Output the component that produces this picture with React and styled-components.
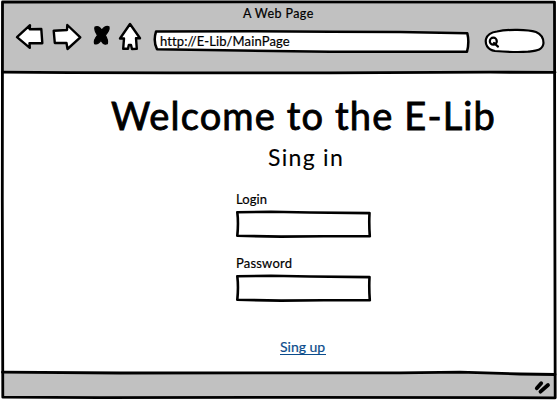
import React from "react";
import styled, { createGlobalStyle } from "styled-components";

const GlobalStyle = createGlobalStyle`
  * { box-sizing: border-box; }
  body { margin: 0; background: #fff; overflow: hidden; }
`;

const Window = styled.div`
  position: relative;
  display: flex;
  flex-direction: column;
  width: 557px;
  height: 400px;
  padding: 2px 2px 3px;
  background: #fff;
  color: #000;
  font-family: Lato, "Open Sans", sans-serif;
`;

const Sketch = styled.svg`
  position: absolute;
  inset: 0;
  width: 100%;
  height: 100%;
  overflow: visible;
  pointer-events: none;
  fill: ${(p) => p.$fill || "none"};
  stroke: #000;
  stroke-width: ${(p) => p.$weight || 2.8};
  stroke-linecap: round;
  stroke-linejoin: round;
`;

const Header = styled.header`
  height: 71px;
  flex: none;
  background: #c1c1c1;
`;

const Text = styled.div`
  width: max-content;
  font-size: ${(p) => p.$size}px;
  font-weight: 400;
  line-height: ${(p) => p.$line}px;
  letter-spacing: ${(p) => p.$track || 0}px;
  -webkit-text-stroke: ${(p) => p.$stroke || 0.2}px currentColor;
  white-space: nowrap;
`;

const TitleBar = styled.div`
  height: 20px;
  padding: 3px 0 0 241px;
`;

const Toolbar = styled.div`
  display: flex;
  align-items: flex-start;
  padding-left: 12px;
`;

const NavIcons = styled.svg`
  width: 138px;
  height: 34px;
  flex: none;
  margin-top: -1px;
  stroke: #000;
  stroke-width: 2.4;
  stroke-linejoin: round;
  stroke-linecap: round;
  fill: #fff;
`;

const AddressBar = styled.div`
  position: relative;
  width: 317px;
  height: 23px;
  margin: 8px 15px 0 0;
`;

const Address = styled(Text)`
  position: relative;
  padding: 2px 0 0 8px;
`;

const Search = styled.div`
  position: relative;
  width: 61px;
  height: 25px;
  margin-top: 7px;
`;

const Main = styled.main`
  flex: 1;
  display: flex;
  flex-direction: column;
`;

const Title = styled(Text)`
  margin: 20px 0 0 109px;
`;

const Subtitle = styled(Text)`
  margin: 3px 0 0 266px;
`;

const Form = styled.form`
  display: flex;
  flex-direction: column;
  gap: 8px;
  margin: 16px 0 0 234px;
`;

const Field = styled.label`
  display: block;
  height: 56px;
`;

const InputBox = styled.span`
  position: relative;
  display: block;
  width: 136px;
  height: 28px;
  margin-top: 2px;
`;

const Input = styled.input`
  position: relative;
  width: 130px;
  height: 22px;
  margin: 3px;
  padding: 0 4px;
  border: 0;
  outline: 0;
  background: transparent;
  font: 13px Lato, sans-serif;
`;

const SignUp = styled.a`
  width: 46px;
  height: 17px;
  margin: 28px 0 0 278px;
  color: #0b4c8c;
  text-decoration: none;
  border-bottom: 1px solid #0b4c8c;
`;

const Footer = styled.footer`
  display: flex;
  justify-content: flex-end;
  height: 24px;
  flex: none;
  padding: 5px 4px 0 0;
  background: #c1c1c1;
`;

const Grip = styled.svg`
  width: 19px;
  height: 17px;
`;

function SketchField({ label, track, type }) {
  return (
    <Field>
      <Text $size={13} $line={18} $track={track}>{label}</Text>
      <InputBox>
        <Sketch $fill="#fff" $weight={2.6} viewBox="0 0 136 28">
          <path d="M1.3 2.2 L35 1.8 L74 2.5 L133.5 3.1 Q132.9 14 133.8 26.3 L88 26.2 L45 26.6 L1.3 25.8 Q2.6 13 1.3 2.2Z" />
        </Sketch>
        <Input type={type} />
      </InputBox>
    </Field>
  );
}

export default function App() {
  return (
    <>
      <GlobalStyle />
      <Window>
        <Header>
          <TitleBar>
            <Text $size={12.5} $line={17} $track={0.4}>A Web Page</Text>
          </TitleBar>
          <Toolbar>
            <NavIcons viewBox="14 21 138 34">
              <path d="M17 37.2 L30 25.2 L29.7 29.2 L41.3 29 L42.3 43.2 L29.5 43.1 L29.8 47.8 Z" />
              <path d="M53.7 30.7 L67 30 L67.3 25 L80.3 37.3 L67.5 49 L66.5 43 L54.8 43 Z" />
              <path
                d="M95 27 Q99 25.3 101.8 30.3 Q105 25.4 109 26.7 Q109.8 30.5 105.3 35.3 Q108.3 40 107.3 43.8 Q103.5 45.5 101 40.3 Q98 45 94.6 43.7 Q93.4 40 97.5 35.3 Q94 30 95 27Z"
                fill="#000"
                strokeWidth="1.2"
              />
              <path d="M130 24 L120 38.5 L124 38.5 L123.2 48.8 L128 48.8 L128.8 45 L131 45 L132 49 L136.8 48.8 L136 38.2 L140 38.2 Z" />
            </NavIcons>
            <AddressBar>
              <Sketch $fill="#fff" $weight={2.5} viewBox="152 30 317 23">
                <path d="M156 31.6 L250 31.2 L330 31.8 L400 32 L467.3 33.2 Q469.5 42 467 51.7 L330 51.7 L240 50.6 L157 49.3 Q153 41 156 31.6Z" />
              </Sketch>
              <Address $size={13} $line={18} $track={0.12}>http://E-Lib/MainPage</Address>
            </AddressBar>
            <Search>
              <Sketch $fill="#fff" $weight={2.2} viewBox="484 29 61 25">
                <path d="M497 31.5 C508 29 528 29.5 536 32 C543 35 543.5 40 543.5 43 C543 50 537 50.5 528 51.7 C516 52.5 504 51.7 495 51 C487 49.5 485 44 486 39 C487.5 34 491 32.3 497 31.5Z" />
                <circle cx="493.3" cy="41.2" r="3.5" />
                <path d="M494 43 L498 46.6" />
              </Sketch>
            </Search>
          </Toolbar>
        </Header>
        <Main>
          <Title as="h1" $size={38} $line={44} $track={1.15} $stroke={0.85}>Welcome to the E-Lib</Title>
          <Subtitle as="h2" $size={23} $line={34} $track={1.3} $stroke={0.1}>Sing in</Subtitle>
          <Form>
            <SketchField label="Login" type="text" track={0.1} />
            <SketchField label="Password" type="password" track={0.2} />
          </Form>
          <SignUp href="#">
            <Text $size={14} $line={18} $track={0}>Sing up</Text>
          </SignUp>
        </Main>
        <Footer>
          <Grip viewBox="533 378 19 17" stroke="#000" strokeLinecap="round" strokeWidth="3.8">
            <path d="M537.8 388.3 L542.2 383.2 M541.5 391.7 L549 385" />
          </Grip>
        </Footer>
        <Sketch viewBox="0 0 557 400">
          <path d="M2.5 2 L240 1.9 L554.5 2.1 L554.8 200 L555.2 397.8 L300 397.3 L100 397.6 L2.8 397.2 L2.3 200 Z" />
          <path d="M2.5 72.2 L70 72.6 L170 72.8 L330 72.8 L490 72.2 L555 72.3" />
          <path d="M2.5 372.2 L120 373 L400 372.8 L460 372.2 L520 374 L555 374.5" />
        </Sketch>
      </Window>
    </>
  );
}
